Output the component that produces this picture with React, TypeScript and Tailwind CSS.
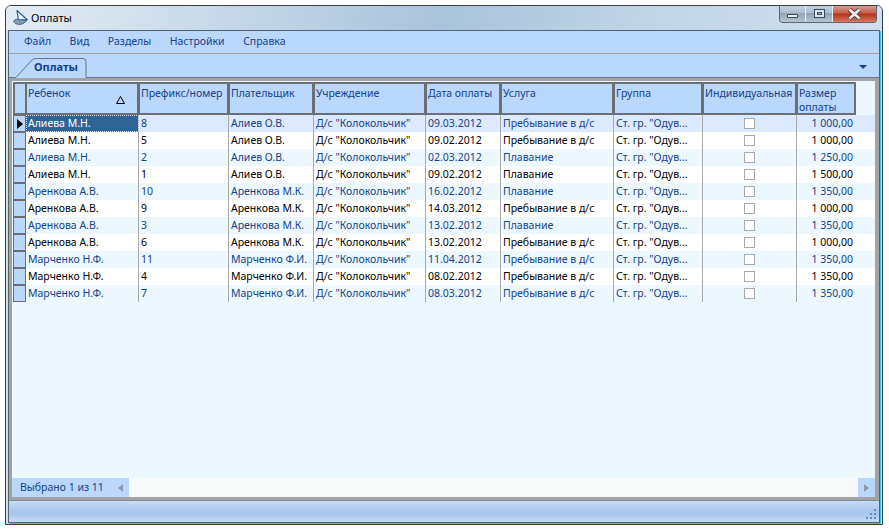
import React from "react";

const font = "[font-family:'Noto_Sans',sans-serif]";

const columns = [
  { title: "Ребенок", width: "w-[113px]" },
  { title: "Префикс/номер", width: "w-[90px]" },
  { title: "Плательщик", width: "w-[85px]" },
  { title: "Учреждение", width: "w-[112px]" },
  { title: "Дата оплаты", width: "w-[75px]" },
  { title: "Услуга", width: "w-[113px]" },
  { title: "Группа", width: "w-[89px]" },
  { title: "Индивидуальная", width: "w-[94px]" },
  { title: "Размер\nоплаты", width: "w-[59px]" },
];

const rows = [
  ["Алиева М.Н.", "8", "Алиев О.В.", "09.03.2012", "Пребывание в д/с", "1 000,00"],
  ["Алиева М.Н.", "5", "Алиев О.В.", "09.02.2012", "Пребывание в д/с", "1 000,00"],
  ["Алиева М.Н.", "2", "Алиев О.В.", "02.03.2012", "Плавание", "1 250,00"],
  ["Алиева М.Н.", "1", "Алиев О.В.", "09.02.2012", "Плавание", "1 500,00"],
  ["Аренкова А.В.", "10", "Аренкова М.К.", "16.02.2012", "Плавание", "1 350,00"],
  ["Аренкова А.В.", "9", "Аренкова М.К.", "14.03.2012", "Пребывание в д/с", "1 000,00"],
  ["Аренкова А.В.", "3", "Аренкова М.К.", "13.02.2012", "Плавание", "1 350,00"],
  ["Аренкова А.В.", "6", "Аренкова М.К.", "13.02.2012", "Пребывание в д/с", "1 000,00"],
  ["Марченко Н.Ф.", "11", "Марченко Ф.И.", "11.04.2012", "Пребывание в д/с", "1 350,00"],
  ["Марченко Н.Ф.", "4", "Марченко Ф.И.", "08.02.2012", "Пребывание в д/с", "1 350,00"],
  ["Марченко Н.Ф.", "7", "Марченко Ф.И.", "08.03.2012", "Пребывание в д/с", "1 350,00"],
];

function TitleBar() {
  return (
    <div className="h-[24px] shrink-0 flex items-center pl-[7px] bg-[linear-gradient(100deg,#e4ecf3_0%,#c6d8e8_25%,#a9c3da_50%,#c3d6e6_75%,#cfdfec_100%)] relative">
      <svg width="16" height="16" viewBox="0 0 16 16">
        <path d="M4 0.5 L14 9.5 L5.5 10 Z" fill="#f2f6fa" stroke="#2a5f9e" strokeWidth="1.2" />
        <path d="M0.5 11 Q3.5 7.5 7 10 L14 10.5 Q10 15 5.5 14.5 Q1.5 14 0.5 11 Z" fill="#8a9cae" stroke="#3f6f9f" strokeWidth="1" />
      </svg>
      <span className="ml-[2px] text-[11px] text-black">Оплаты</span>
      <div className="absolute top-[-1px] right-[5px] flex h-[18px] border border-t-0 border-[#5a6672] rounded-b-[4px] overflow-hidden">
        <div className="w-[26px] flex items-end justify-center pb-[4px] bg-[linear-gradient(#c5d5e3,#a8bccd_50%,#8ea4b7_50%,#b4c6d5)] border-r border-[#e8eef4]">
          <div className="w-[11px] h-[4px] bg-[#e8eef4] border border-[#3c4a58] rounded-[1px]" />
        </div>
        <div className="w-[27px] flex items-center justify-center bg-[linear-gradient(#c5d5e3,#a8bccd_50%,#8ea4b7_50%,#b4c6d5)] border-r border-[#e8eef4]">
          <div className="w-[11px] h-[9px] bg-[#dfe7ee] border border-[#3c4a58] flex items-center justify-center">
            <div className="w-[5px] h-[3px] bg-[#a8bccd] border border-[#3c4a58]" />
          </div>
        </div>
        <div className="w-[43px] flex items-center justify-center bg-[linear-gradient(#d9a59c,#c8614f_45%,#b8341f_55%,#d97a60)]">
          <svg width="15" height="12" viewBox="0 0 15 12">
            <path d="M2.5 1.5 L12.5 10.5 M12.5 1.5 L2.5 10.5" stroke="#4a3a3a" strokeWidth="4.5" />
            <path d="M2.5 1.5 L12.5 10.5 M12.5 1.5 L2.5 10.5" stroke="#f2ece8" strokeWidth="2.8" />
          </svg>
        </div>
      </div>
    </div>
  );
}

function MenuBar() {
  const items = ["Файл", "Вид", "Разделы", "Настройки", "Справка"];
  return (
    <div className="h-[23px] shrink-0 bg-[#bad7fd] border-b border-[#a3a3a3] flex items-center pl-[15px] gap-[18.5px] text-[10.5px] text-[#15428b]">
      {items.map((i) => (
        <span key={i}>{i}</span>
      ))}
    </div>
  );
}

function TabStrip() {
  return (
    <div className="h-[24px] shrink-0 bg-[#bad7fd] relative flex items-end">
      <svg className="absolute left-0 bottom-0" width="90" height="21" viewBox="0 0 90 21">
        <path d="M0 20.5 L7 20.5 L22 4 Q24 1.5 27 1.5 L74 1.5 Q77 1.5 77 5 L77 20.5" fill="#bad7fd" stroke="#6a7480" strokeWidth="1" />
      </svg>
      <span className="relative ml-[25px] mb-[3px] text-[11px] font-bold text-[#15428b]">Оплаты</span>
      <div className="absolute left-[77px] right-0 bottom-0 border-b border-[#6a7480]" />
      <div className="absolute right-[12px] top-[11px] w-0 h-0 border-x-[4px] border-x-transparent border-t-[4px] border-t-[#15428b]" />
    </div>
  );
}

function HeaderRow() {
  return (
    <div className="flex h-[33px]">
      <div className="w-[13px] bg-[#bad7fd] border-2 border-[#6b6f75] border-r-[1px] shrink-0" />
      {columns.map((c, i) => (
        <div
          key={c.title}
          className={`${c.width} relative shrink-0 bg-[#bad7fd] border-2 border-[#6b6f75] border-l-[1px] pl-[1px] pt-[2px] text-[10.5px] leading-[14px] text-[#15428b] whitespace-pre-line overflow-hidden`}
        >
          {c.title}
          {i === 0 && (
            <svg className="absolute right-[12px] top-[12px]" width="9" height="8" viewBox="0 0 9 8">
              <path d="M4.5 0.5 L8.5 7.5 L0.5 7.5 Z" fill="none" stroke="#000" />
            </svg>
          )}
        </div>
      ))}
    </div>
  );
}

function Row({ r, index }: { r: string[]; index: number }) {
  const selected = index === 0;
  const blue = index % 2 === 0;
  const bg = selected ? "bg-[#dce9fe]" : blue ? "bg-[#ecf8fe]" : "bg-white";
  const color = blue ? "text-[#15428b]" : "text-black";
  const cell = "h-[17px] shrink-0 pl-[2px] leading-[16px] text-[10.5px] whitespace-nowrap overflow-hidden";
  const sep = "border-r border-[#a9a9a9]";
  return (
    <div className={`flex h-[17px] ${bg} ${color}`}>
      <div className="w-[13px] shrink-0 flex items-center justify-center bg-[#bad7fd] border border-[#6b6f75]">
        {selected && <div className="w-0 h-0 border-y-[5px] border-y-transparent border-l-[6px] border-l-black" />}
      </div>
      <div
        className={`${cell} ${sep} w-[113px] ${selected ? "bg-[#2f6496] text-white outline-1 outline-dotted outline-[#dbe6f2] -outline-offset-1" : ""}`}
      >
        {r[0]}
      </div>
      <div className={`${cell} ${sep} w-[90px]`}>{r[1]}</div>
      <div className={`${cell} ${sep} w-[85px]`}>{r[2]}</div>
      <div className={`${cell} ${sep} w-[112px]`}>Д/с "Колокольчик"</div>
      <div className={`${cell} ${sep} w-[75px]`}>{r[3]}</div>
      <div className={`${cell} ${sep} w-[113px]`}>{r[4]}</div>
      <div className={`${cell} ${sep} w-[89px]`}>Ст. гр. "Одув...</div>
      <div className={`${cell} ${sep} w-[94px] flex items-center justify-center pr-[3px]`}>
        <div className="w-[11px] h-[11px] bg-white border border-[#a9a9a9]" />
      </div>
      <div className={`${cell} w-[59px] text-right pr-[3px]`}>{r[5]}</div>
    </div>
  );
}

function Grid() {
  return (
    <div className="flex-1 min-h-0 bg-[#ecf8fe] border-[3px] border-[#a3a3a3] border-r-[4px] flex flex-col">
      <div className="flex-1 pl-[1px] pt-[1px]">
        <HeaderRow />
        {rows.map((r, i) => (
          <Row key={i} r={r} index={i} />
        ))}
      </div>
      <div className="h-[19px] flex text-[10.5px] text-[#15428b]">
        <div className="w-[117px] bg-[#bad7fd] flex items-center justify-between pl-[8px] pr-[6px]">
          <span>Выбрано 1 из 11</span>
          <div className="w-0 h-0 border-y-[4px] border-y-transparent border-r-[5px] border-r-[#8c9aa8]" />
        </div>
        <div className="flex-1 bg-[#f8fafa]" />
        <div className="w-[17px] bg-[#bad7fd] flex items-center justify-center">
          <div className="w-0 h-0 border-y-[4px] border-y-transparent border-l-[5px] border-l-[#8c9aa8]" />
        </div>
      </div>
    </div>
  );
}

function StatusBar() {
  return (
    <div className="h-[22px] shrink-0 border-t border-[#7f8c98] bg-[linear-gradient(#c6dcf6,#a9c8ee_45%,#a9c8ee_65%,#c6dcf6)] relative">
      <svg className="absolute right-[2px] bottom-[2px]" width="11" height="11" viewBox="0 0 11 11" fill="#5f88c0">
        <rect x="8" y="0" width="2" height="2" />
        <rect x="4" y="4" width="2" height="2" />
        <rect x="8" y="4" width="2" height="2" />
        <rect x="0" y="8" width="2" height="2" />
        <rect x="4" y="8" width="2" height="2" />
        <rect x="8" y="8" width="2" height="2" />
      </svg>
    </div>
  );
}

export default function App() {
  return (
    <div className={`w-[889px] h-[531px] bg-white pl-[5px] pt-[5px] ${font}`}>
      <div className="w-[878px] h-[520px] border border-[#3b3b3b] rounded-t-[6px] bg-[#cfdfec] overflow-hidden flex flex-col">
        <TitleBar />
        <div className="flex-1 min-h-0 mx-[2px] mb-[1px] border border-[#54616e] shadow-[1px_1px_0_#35c6ee] flex flex-col">
          <MenuBar />
          <TabStrip />
          <Grid />
          <StatusBar />
        </div>
      </div>
    </div>
  );
}
